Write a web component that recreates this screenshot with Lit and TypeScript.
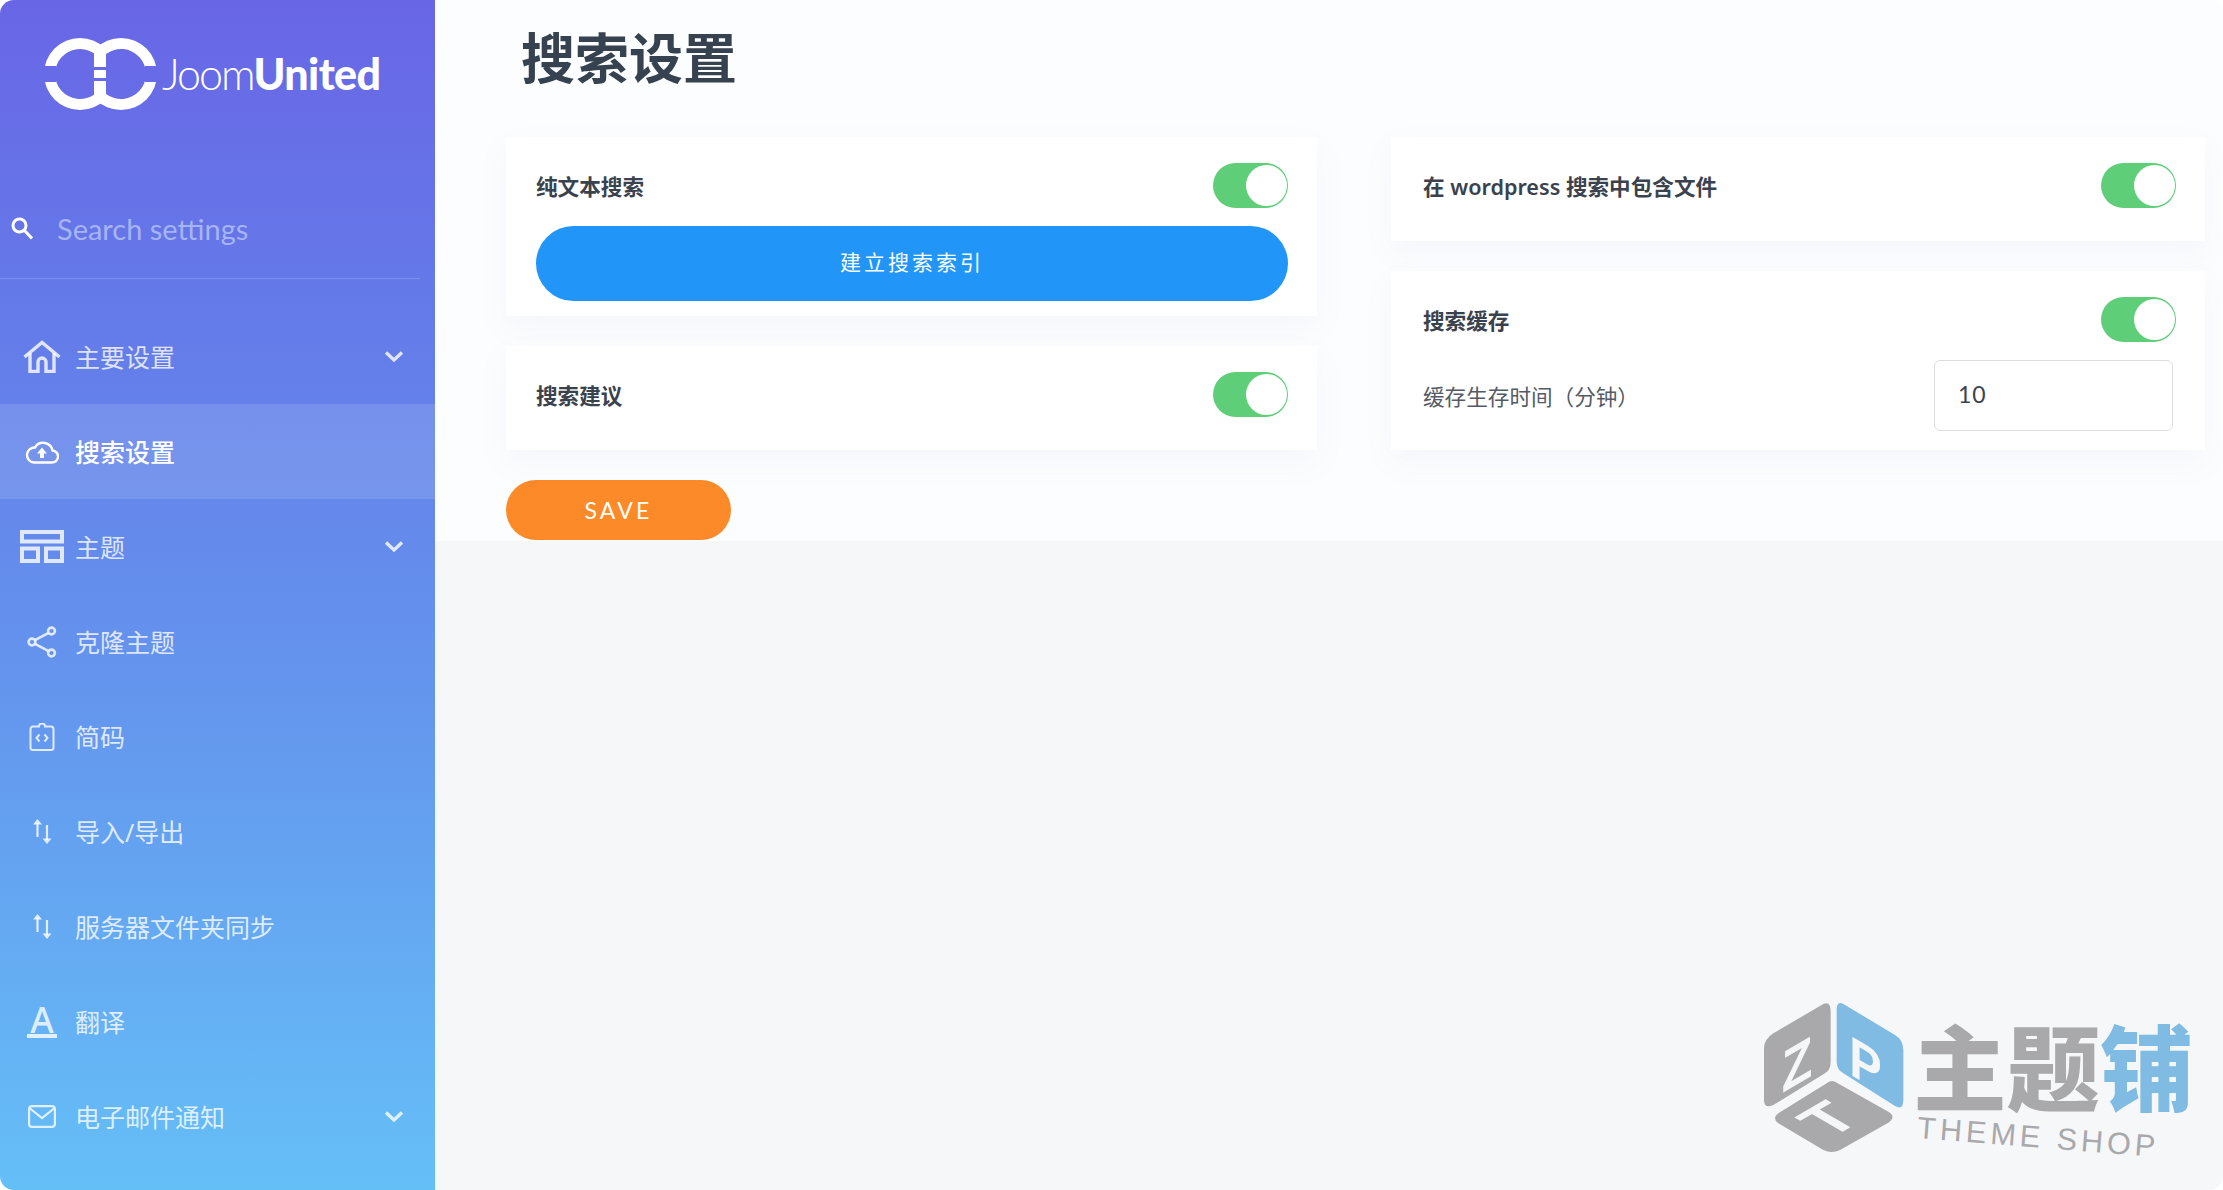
import { LitElement, html, css, svg } from "lit";
import { customElement } from "lit/decorators.js";

const homeIcon = html`<svg width="38" height="33" viewBox="0 0 38 33" fill="none" stroke="currentColor" stroke-width="3.4">
  <path d="M1.5 17 L19 2.5 L36.5 17" />
  <path d="M7 13 V31.5 H15 V22 a4 4 0 0 1 8 0 V31.5 H31 V13" />
</svg>`;

const cloudIcon = html`<svg width="34" height="24" viewBox="0 0 34 24" fill="none" stroke="currentColor" stroke-width="2.4">
  <path d="M9 22.5 H26.5 a6 6 0 0 0 1 -12 A 9.5 9.5 0 0 0 10 7.5 A 7.5 7.5 0 0 0 9 22.5 Z" />
  <path d="M17 7.5 L22 13.5 H19 V18 H15 V13.5 H12 Z" fill="currentColor" stroke="none" />
</svg>`;

const layoutIcon = html`<svg width="44" height="33" viewBox="0 0 44 33" fill="none" stroke="currentColor" stroke-width="4">
  <rect x="2" y="2" width="40" height="9.5" />
  <rect x="2" y="18.5" width="16" height="12.5" />
  <rect x="26" y="18.5" width="16" height="12.5" />
</svg>`;

const shareIcon = html`<svg width="30" height="32" viewBox="0 0 30 32" fill="none" stroke="currentColor" stroke-width="2.6">
  <circle cx="24.5" cy="5" r="3.4" />
  <circle cx="5" cy="16" r="3.4" />
  <circle cx="24.5" cy="27" r="3.4" />
  <path d="M21.6 6.8 L8 14.2 M8 17.8 L21.6 25.2" />
</svg>`;

const codeIcon = html`<svg width="26" height="28" viewBox="0 0 26 28" fill="none" stroke="currentColor" stroke-width="2">
  <path d="M4 3.5 H10 a3 3 0 0 1 6 0 H22 a2.5 2.5 0 0 1 2.5 2.5 V24.5 a2.5 2.5 0 0 1 -2.5 2.5 H4 a2.5 2.5 0 0 1 -2.5 -2.5 V6 A2.5 2.5 0 0 1 4 3.5 Z" />
  <path d="M10.5 11.5 L7.5 15 L10.5 18.5 M15.5 11.5 L18.5 15 L15.5 18.5" />
</svg>`;

const arrowsIcon = html`<svg width="19" height="25" viewBox="0 0 19 25" fill="none" stroke="currentColor" stroke-width="2.2">
  <path d="M4.5 4 V18 M14 6 V21" />
  <path d="M4.5 0 L9 5.5 H0 Z M14 25 L9.5 19.5 H18.5 Z" fill="currentColor" stroke="none" />
</svg>`;

const fontIcon = html`<span class="glyph-a">A</span>`;

const mailIcon = html`<svg width="28" height="23" viewBox="0 0 28 23" fill="none" stroke="currentColor" stroke-width="2.2">
  <rect x="1.1" y="1.1" width="25.8" height="20.8" rx="3" />
  <path d="M2 3.5 L14 13 L26 3.5" />
</svg>`;

const chevron = html`<svg class="chevron" width="20" height="13" viewBox="0 0 20 13" fill="none" stroke="currentColor" stroke-width="3.4">
  <path d="M2 2.5 L10 10 L18 2.5" />
</svg>`;

const navItems = [
  { label: "主要设置", icon: homeIcon, more: true },
  { label: "搜索设置", icon: cloudIcon, active: true },
  { label: "主题", icon: layoutIcon, more: true },
  { label: "克隆主题", icon: shareIcon },
  { label: "简码", icon: codeIcon },
  { label: "导入/导出", icon: arrowsIcon },
  { label: "服务器文件夹同步", icon: arrowsIcon },
  { label: "翻译", icon: fontIcon },
  { label: "电子邮件通知", icon: mailIcon, more: true },
];

const watermark = svg`
  <path d="M250 72 L100 160 Q72 178 72 205 V360 Q72 388 100 375 L255 280 Q272 270 272 245 V95 Q272 62 250 72 Z" fill="#a9a9ab" />
  <path d="M310 72 L465 165 Q490 180 490 210 V360 Q490 392 465 378 L310 280 Q290 268 290 245 V90 Q290 62 310 72 Z" fill="#7fbbe2" />
  <path d="M285 305 L445 395 Q470 410 445 428 L300 510 Q275 522 250 510 L115 430 Q95 415 115 400 L260 310 Q272 300 285 305 Z" fill="#a9a9ab" />
  <text class="wm-letter" transform="matrix(0.86 -0.5 0 1 125 340)" font-size="175">Z</text>
  <text class="wm-letter" transform="matrix(0.86 0.5 0 1 328 282)" font-size="170">P</text>
  <text class="wm-letter" transform="matrix(0.86 -0.5 0.86 0.5 271 477)" font-size="185">T</text>
  <text class="wm-cjk" x="520" y="372" font-size="280" fill="#a9a9ab">主题<tspan fill="#7fbbe2">铺</tspan></text>
  <text class="wm-en" transform="rotate(4.5 530 470)" x="530" y="474" font-size="92" fill="#a9a9ab">THEME SHOP</text>
`;

@customElement("app-root")
export class AppRoot extends LitElement {
  static styles = css`
    :host {
      display: block;
      background: #fff;
      font-family: "Noto Sans", "Noto Sans CJK SC", sans-serif;
    }
    .shell {
      position: relative;
      display: flex;
      height: 1190px;
      border-radius: 14px;
      overflow: hidden;
      background: #f6f7f9;
    }
    .sidebar {
      flex: 0 0 435px;
      min-width: 0;
      background: linear-gradient(180deg, #6966e6 0%, #647ce9 28%, #6497ee 60%, #65bff7 100%);
      color: rgba(255, 255, 255, 0.8);
    }
    .logo {
      display: flex;
      align-items: flex-end;
      height: 72px;
      padding: 38px 0 0 44px;
    }
    .logo-text {
      margin: 0 0 16px 5px;
      color: #fff;
      font-family: "Lato", sans-serif;
      font-size: 43px;
      line-height: 40px;
      letter-spacing: -2px;
      font-weight: 300;
    }
    .logo-text b {
      font-weight: 900;
      letter-spacing: -0.6px;
    }
    .search {
      display: flex;
      align-items: center;
      height: 62px;
      margin-top: 87px;
      padding: 0 0 19px 11px;
    }
    .search input {
      flex: 1;
      width: 0;
      min-width: 0;
      margin: 0 20px 0 24px;
      padding: 0;
      border: 0;
      background: none;
      outline: none;
      color: #fff;
      font: 400 29px "Lato", sans-serif;
    }
    .search input::placeholder {
      color: #a5b4f3;
      opacity: 1;
    }
    .divider {
      width: 420px;
      height: 1px;
      background: #7a92ee;
    }
    nav {
      margin-top: 30px;
    }
    .item {
      display: flex;
      align-items: center;
      height: 95px;
      padding: 0 31px 0 20px;
      font-size: 25px;
      box-sizing: border-box;
    }
    .item.active {
      background: rgba(255, 255, 255, 0.12);
      color: #fff;
      font-weight: 500;
    }
    .item-icon {
      display: flex;
      justify-content: center;
      width: 44px;
      margin-right: 11px;
    }
    .item-label {
      padding-bottom: 2px;
    }
    .chevron {
      margin-left: auto;
    }
    .glyph-a {
      display: block;
      width: 30px;
      height: 28px;
      border-bottom: 4px solid currentColor;
      text-align: center;
      font: 500 36px/27px "Noto Sans", sans-serif;
    }
    main {
      flex: 1;
      min-width: 0;
    }
    .panel {
      height: 541px;
      padding: 28px 18px 0 71px;
      box-sizing: border-box;
      background: #fcfdfe;
    }
    h1 {
      margin: 0 0 49px 15px;
      color: #36424f;
      font-size: 54px;
      line-height: 60px;
      font-weight: 700;
    }
    .cols {
      display: grid;
      grid-template-columns: 811px 814px;
      column-gap: 74px;
    }
    .col {
      display: flex;
      flex-direction: column;
      gap: 30px;
    }
    .card {
      padding: 26px 29px 33px 30px;
      background: #fff;
      box-shadow: 0 12px 30px rgba(120, 140, 210, 0.06);
      color: #3a424d;
      font-size: 21.6px;
    }
    .col.right .card {
      padding-left: 32px;
    }
    .card.tall {
      padding-bottom: 15px;
    }
    .card.cache {
      padding-bottom: 19px;
    }
    .row {
      display: flex;
      align-items: center;
      justify-content: space-between;
      height: 45px;
    }
    .row > span {
      font-weight: 600;
    }
    .switch {
      position: relative;
      width: 75px;
      height: 45px;
      border-radius: 23px;
      background: #5fce78;
    }
    .switch::after {
      content: "";
      position: absolute;
      top: 2px;
      right: 1px;
      width: 41px;
      height: 41px;
      border-radius: 50%;
      background: #fff;
    }
    .build {
      display: block;
      width: 752px;
      height: 75px;
      margin-top: 18px;
      padding: 0 0 5px;
      border: 0;
      border-radius: 38px;
      background: #2196f8;
      color: #fff;
      font: 400 21px "Noto Sans", "Noto Sans CJK SC", sans-serif;
      letter-spacing: 3px;
    }
    .field {
      display: flex;
      align-items: center;
      justify-content: space-between;
      margin-top: 18px;
      padding-right: 3px;
      color: #555b65;
    }
    .field input {
      width: 239px;
      height: 71px;
      padding: 0 0 4px 23px;
      box-sizing: border-box;
      border: 1.5px solid #dedede;
      border-radius: 6px;
      background: #fff;
      outline: none;
      color: #3a424d;
      font: 400 23px "Lato", sans-serif;
      letter-spacing: 1px;
    }
    .save {
      display: block;
      width: 225px;
      height: 60px;
      margin-top: 30px;
      border: 0;
      border-radius: 30px;
      background: #fd8a28;
      color: #fff;
      font: 400 23px "Lato", sans-serif;
      letter-spacing: 3.2px;
    }
    .watermark {
      position: absolute;
      right: 0;
      bottom: 0;
    }
    .wm-letter {
      fill: #f5f6f8;
      font-family: "Liberation Sans", sans-serif;
      font-weight: 700;
    }
    .wm-cjk {
      font-family: "Noto Sans CJK SC", sans-serif;
      font-weight: 900;
    }
    .wm-en {
      font-family: "Liberation Sans", sans-serif;
      letter-spacing: 12px;
    }
  `;

  private renderLogo() {
    return html`<svg width="113" height="72" viewBox="0 0 113 72">
      <mask id="logo-cut">
        <rect width="113" height="72" fill="#000" />
        <circle cx="36" cy="36" r="36" fill="#fff" />
        <circle cx="77" cy="36" r="36" fill="#fff" />
        <path d="M50 15.3 A25 25 0 1 0 50 56.7 Z" fill="#000" />
        <path d="M62 16 A25 25 0 1 1 62 56 Z" fill="#000" />
        <rect x="0" y="28" width="12" height="16" fill="#000" />
        <rect x="101" y="28" width="12" height="16" fill="#000" />
        <rect x="50" y="29" width="12" height="3" fill="#000" />
        <rect x="50" y="40" width="12" height="3" fill="#000" />
      </mask>
      <rect width="113" height="72" fill="#fff" mask="url(#logo-cut)" />
    </svg>`;
  }

  private renderToggle() {
    return html`<div class="switch"></div>`;
  }

  render() {
    return html`
      <div class="shell">
        <aside class="sidebar">
          <div class="logo">
            ${this.renderLogo()}
            <div class="logo-text">Joom<b>United</b></div>
          </div>
          <div class="search">
            <svg width="22" height="23" viewBox="0 0 22 23" fill="none" stroke="#fff" stroke-width="3">
              <circle cx="8.5" cy="8.5" r="6.5" />
              <path d="M13.5 13.5 L21 21.5" />
            </svg>
            <input placeholder="Search settings" />
          </div>
          <div class="divider"></div>
          <nav>
            ${navItems.map(
              (n) => html`
                <div class="item ${n.active ? "active" : ""}">
                  <span class="item-icon">${n.icon}</span>
                  <span class="item-label">${n.label}</span>
                  ${n.more ? chevron : ""}
                </div>
              `
            )}
          </nav>
        </aside>
        <main>
          <div class="panel">
            <h1>搜索设置</h1>
            <div class="cols">
              <div class="col">
                <div class="card tall">
                  <div class="row"><span>纯文本搜索</span>${this.renderToggle()}</div>
                  <button class="build">建立搜索索引</button>
                </div>
                <div class="card">
                  <div class="row"><span>搜索建议</span>${this.renderToggle()}</div>
                </div>
              </div>
              <div class="col right">
                <div class="card">
                  <div class="row"><span>在 wordpress 搜索中包含文件</span>${this.renderToggle()}</div>
                </div>
                <div class="card cache">
                  <div class="row"><span>搜索缓存</span>${this.renderToggle()}</div>
                  <div class="field">
                    <label>缓存生存时间（分钟）</label>
                    <input value="10" />
                  </div>
                </div>
              </div>
            </div>
            <button class="save">SAVE</button>
          </div>
        </main>
        <svg class="watermark" width="483" height="210" viewBox="0 0 1449 630">${watermark}</svg>
      </div>
    `;
  }
}
